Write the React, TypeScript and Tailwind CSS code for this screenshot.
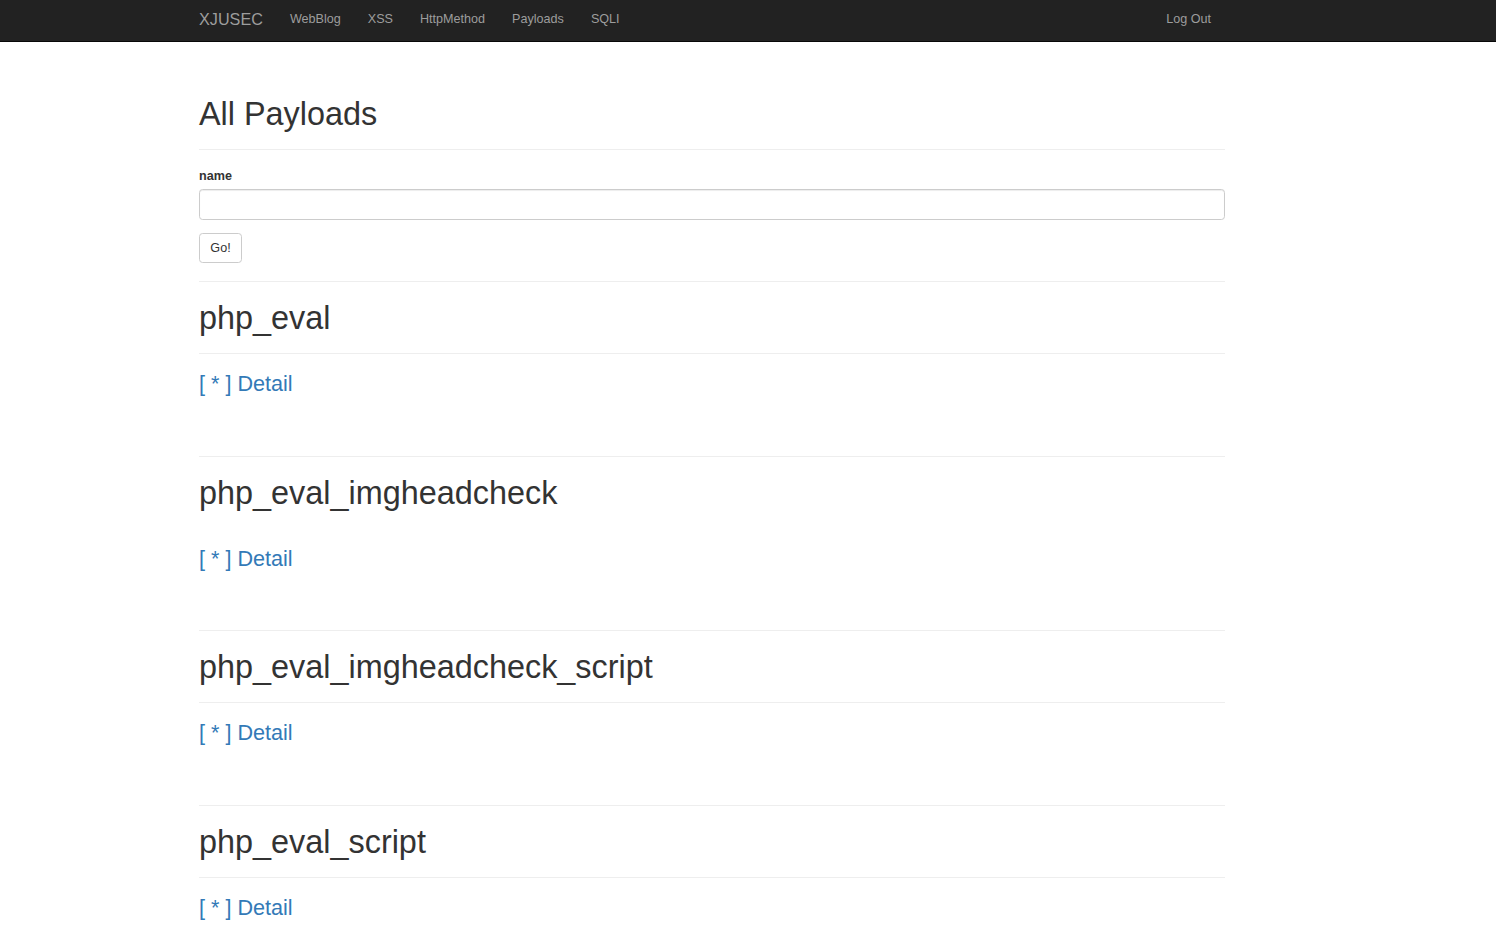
const payloads = [
  { name: "php_eval", underline: true },
  { name: "php_eval_imgheadcheck", underline: false },
  { name: "php_eval_imgheadcheck_script", underline: true },
  { name: "php_eval_script", underline: true },
];

const navLinks = ["WebBlog", "XSS", "HttpMethod", "Payloads", "SQLI"];

function Navbar() {
  return (
    <nav className="h-[42px] bg-[#222] border-b border-[#080808]">
      <div className="ml-[199px] w-[1026px] flex justify-between pt-[9px] pr-[14px]">
        <div className="flex gap-[27px] items-start">
          <a href="#" className="text-[16.2px] leading-[20px] text-[#9d9d9d]">
            XJUSEC
          </a>
          {navLinks.map((l) => (
            <a key={l} href="#" className="text-[12.6px] leading-[20px] text-[#9d9d9d]">
              {l}
            </a>
          ))}
        </div>
        <a href="#" className="text-[12.6px] leading-[20px] text-[#9d9d9d]">
          Log Out
        </a>
      </div>
    </nav>
  );
}

function PayloadItem({ name, underline }: { name: string; underline: boolean }) {
  return (
    <div className="h-[174.5px] border-t border-[#eee]">
      <div
        className={
          "pt-[18px] pb-[17px] border-b " +
          (underline ? "border-[#eee]" : "border-transparent")
        }
      >
        <h1 className="text-[32.4px] leading-[36px] font-normal text-[#333]">{name}</h1>
      </div>
      <h3 className="mt-[18px] text-[21.6px] leading-[24px] font-normal">
        <a href="#" className="text-[#337ab7]">
          [ * ] Detail
        </a>
      </h3>
    </div>
  );
}

export default function App() {
  return (
    <div
      className="h-screen overflow-hidden bg-white text-[#333]"
      style={{ fontFamily: '"Liberation Sans", Arial, Helvetica, sans-serif' }}
    >
      <Navbar />
      <main className="ml-[199px] w-[1026px]">
        <div className="mt-[54px] pb-[17px] border-b border-[#eee]">
          <h1 className="text-[32.4px] leading-[36px] font-normal">All Payloads</h1>
        </div>
        <form onSubmit={(e) => e.preventDefault()}>
          <label className="block mt-[17px] mb-[4px] text-[12.6px] leading-[18px] font-bold">
            name
          </label>
          <input
            type="text"
            className="block w-full h-[31px] border border-[#ccc] rounded-[3.6px] px-[11px] text-[12.6px] shadow-[inset_0_1px_1px_rgba(0,0,0,0.075)] outline-none"
          />
          <button
            type="submit"
            className="mt-[13px] h-[30px] w-[43px] border border-[#ccc] rounded-[3.6px] bg-white text-[12.6px] text-[#333]"
          >
            Go!
          </button>
        </form>
        <div className="mt-[18px]">
          {payloads.map((p) => (
            <PayloadItem key={p.name} name={p.name} underline={p.underline} />
          ))}
        </div>
      </main>
    </div>
  );
}
